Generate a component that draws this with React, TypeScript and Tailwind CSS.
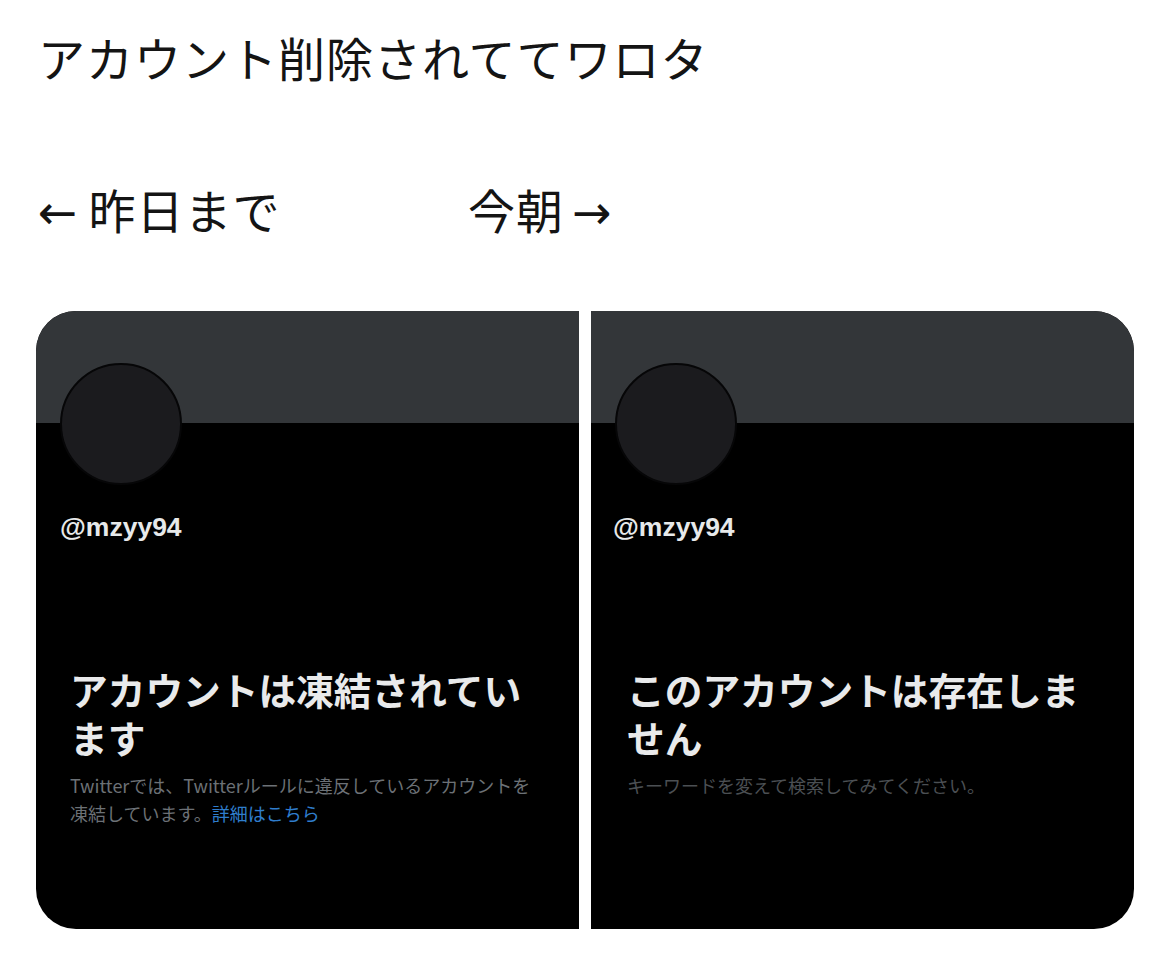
import React from 'react'

const jp = '"Noto Sans CJK JP", "Noto Sans", sans-serif'
const latin = '"Liberation Sans", "Noto Sans CJK JP", sans-serif'
const arrowFont = '"DejaVu Sans", sans-serif'

type CardProps = {
  handleX: number
  titleX: number
  title: string[]
  children: React.ReactNode
}

function ProfileCard({ handleX, titleX, title, children }: CardProps) {
  return (
    <div className="flex h-[618px] w-[543px] flex-col bg-black">
      {/* Banner */}
      <div className="h-[112px] w-full bg-[#333639]" />

      {/* Avatar */}
      <div className="-mt-[60px] ml-[24px] h-[122px] w-[122px] rounded-full border-2 border-[#060607] bg-[#1b1b1e]" />

      <div
        className="mt-[27px] text-[26.5px] leading-[30px] font-bold text-[#e7e9ea]"
        style={{ paddingLeft: handleX, fontFamily: latin }}
      >
        @mzyy94
      </div>

      <div className="mt-[123px]" style={{ paddingLeft: titleX }}>
        <h2 className="text-[37.7px] leading-[48px] font-bold text-[#e9eaeb]">
          {title.map((line) => (
            <div key={line}>{line}</div>
          ))}
        </h2>
        <div className="mt-[10px] text-[18px] leading-[28px]">{children}</div>
      </div>
    </div>
  )
}

export default function App() {
  return (
    <div className="min-h-screen w-[1170px] bg-white" style={{ fontFamily: jp }}>
      {/* Tweet text */}
      <div className="pl-[38px] pt-[19px] text-[47px] leading-[76px] tracking-[1px] text-[#141414]">
        <p>アカウント削除されててワロタ</p>
        <div className="h-[76px]" />
        <div className="flex h-[76px]">
          <span className="w-[430px]">
            <span className="mr-[10px]" style={{ fontFamily: arrowFont }}>←</span>
            昨日まで
          </span>
          <span>
            今朝
            <span className="ml-[8px]" style={{ fontFamily: arrowFont }}>→</span>
          </span>
        </div>
      </div>

      {/* Screenshots */}
      <div className="mx-[36px] mt-[64px] flex w-[1098px] gap-[12px] overflow-hidden rounded-[40px]">
        <ProfileCard handleX={24} titleX={34} title={['アカウントは凍結されてい', 'ます']}>
          <p className="text-[#6c7176]">
            Twitterでは、Twitterルールに違反しているアカウントを
            <br />
            凍結しています。<span className="text-[#2f7dcc]">詳細はこちら</span>
          </p>
        </ProfileCard>
        <ProfileCard handleX={22} titleX={36} title={['このアカウントは存在しま', 'せん']}>
          <p className="text-[#4b4f53]">キーワードを変えて検索してみてください。</p>
        </ProfileCard>
      </div>
    </div>
  )
}
